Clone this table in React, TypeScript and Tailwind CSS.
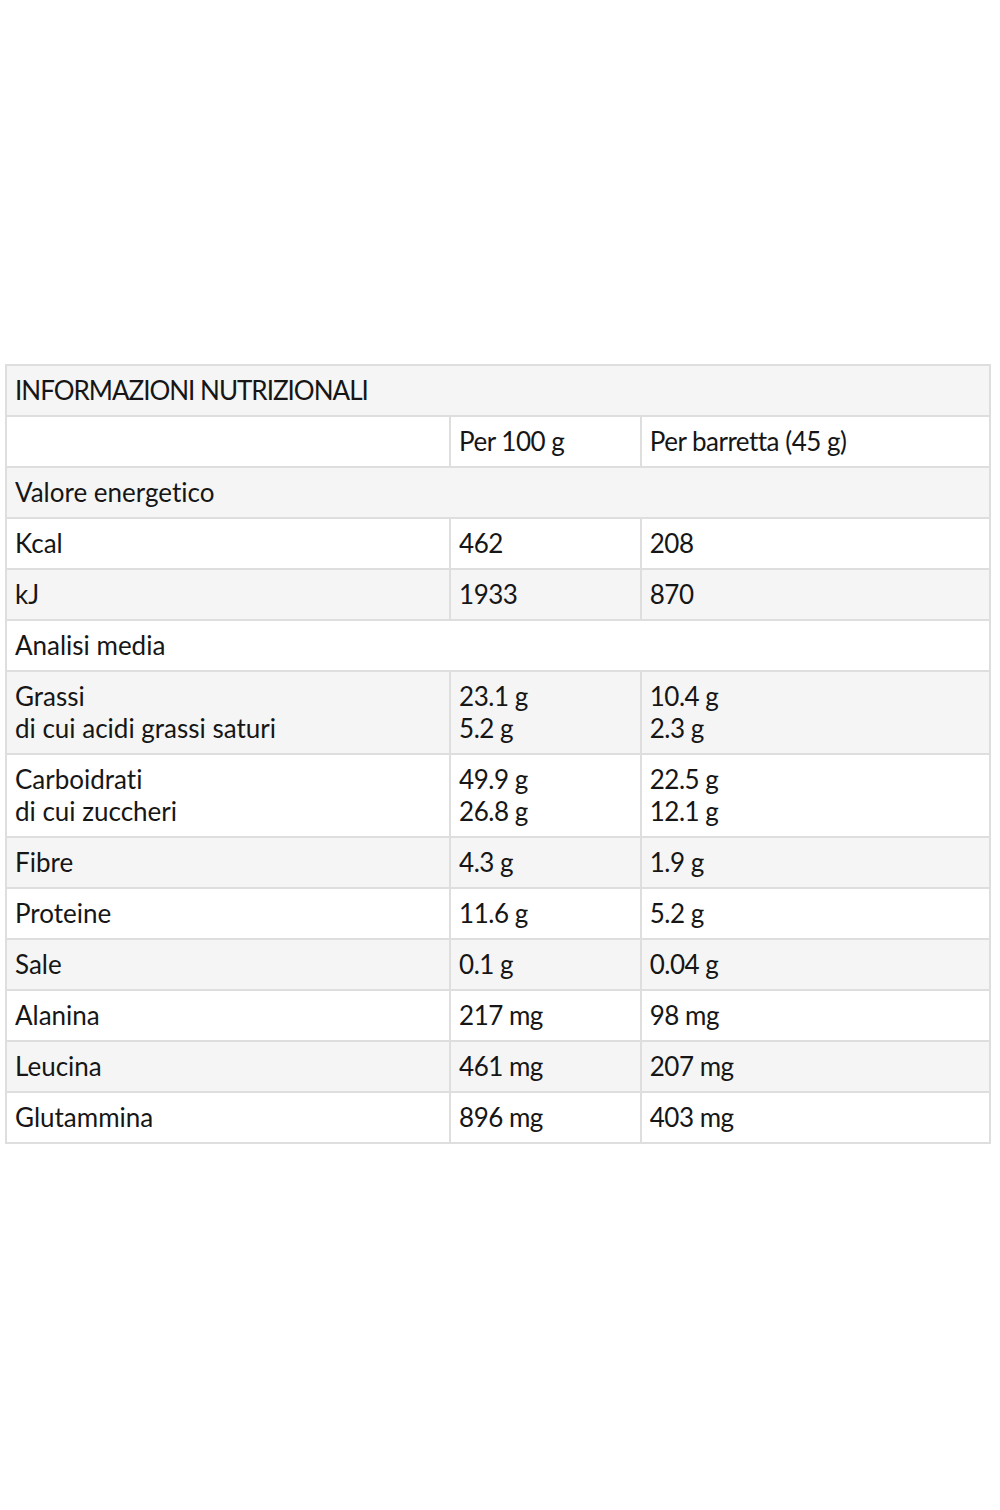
import React from "react";

type Row = { label: string[]; a: string[]; b: string[]; span?: boolean };

const rows: Row[] = [
  { label: ["INFORMAZIONI NUTRIZIONALI"], a: [], b: [], span: true },
  { label: [""], a: ["Per 100 g"], b: ["Per barretta (45 g)"] },
  { label: ["Valore energetico"], a: [], b: [], span: true },
  { label: ["Kcal"], a: ["462"], b: ["208"] },
  { label: ["kJ"], a: ["1933"], b: ["870"] },
  { label: ["Analisi media"], a: [], b: [], span: true },
  { label: ["Grassi", "di cui acidi grassi saturi"], a: ["23.1 g", "5.2 g"], b: ["10.4 g", "2.3 g"] },
  { label: ["Carboidrati", "di cui zuccheri"], a: ["49.9 g", "26.8 g"], b: ["22.5 g", "12.1 g"] },
  { label: ["Fibre"], a: ["4.3 g"], b: ["1.9 g"] },
  { label: ["Proteine"], a: ["11.6 g"], b: ["5.2 g"] },
  { label: ["Sale"], a: ["0.1 g"], b: ["0.04 g"] },
  { label: ["Alanina"], a: ["217 mg"], b: ["98 mg"] },
  { label: ["Leucina"], a: ["461 mg"], b: ["207 mg"] },
  { label: ["Glutammina"], a: ["896 mg"], b: ["403 mg"] },
];

function Lines({ items, className }: { items: string[]; className?: string }) {
  return (
    <>
      {items.map((t, i) => (
        <div key={i} className={className}>
          {t || "\u00a0"}
        </div>
      ))}
    </>
  );
}

export default function App() {
  const cell = "border-2 border-[#dedede] pl-[8px] pr-[9px] pt-[8px] pb-[9px] align-top";
  return (
    <div className="min-h-[1510px] w-[1000px] bg-white pt-[364px] pl-[5px]">
      <table
        className="w-[986px] border-collapse text-[26px] leading-[32px] text-[#161616] [font-variant-ligatures:none]"
        style={{ fontFamily: "Lato, 'Noto Sans', sans-serif" }}
      >
        <colgroup>
          <col className="w-[445px]" />
          <col className="w-[191px]" />
          <col className="w-[350px]" />
        </colgroup>
        <tbody>
          {rows.map((r, i) => (
            <tr key={i} className={i % 2 === 0 ? "bg-[#f5f5f5]" : "bg-white"}>
              {r.span ? (
                <td colSpan={3} className={cell}>
                  <Lines items={r.label} className={i === 0 ? "tracking-[-1px]" : ""} />
                </td>
              ) : (
                <>
                  <td className={cell}>
                    <Lines items={r.label} />
                  </td>
                  <td className={cell}>
                    <Lines items={r.a} className="tracking-[-0.5px]" />
                  </td>
                  <td className={cell}>
                    <Lines items={r.b} className="tracking-[-0.5px]" />
                  </td>
                </>
              )}
            </tr>
          ))}
        </tbody>
      </table>
    </div>
  );
}
